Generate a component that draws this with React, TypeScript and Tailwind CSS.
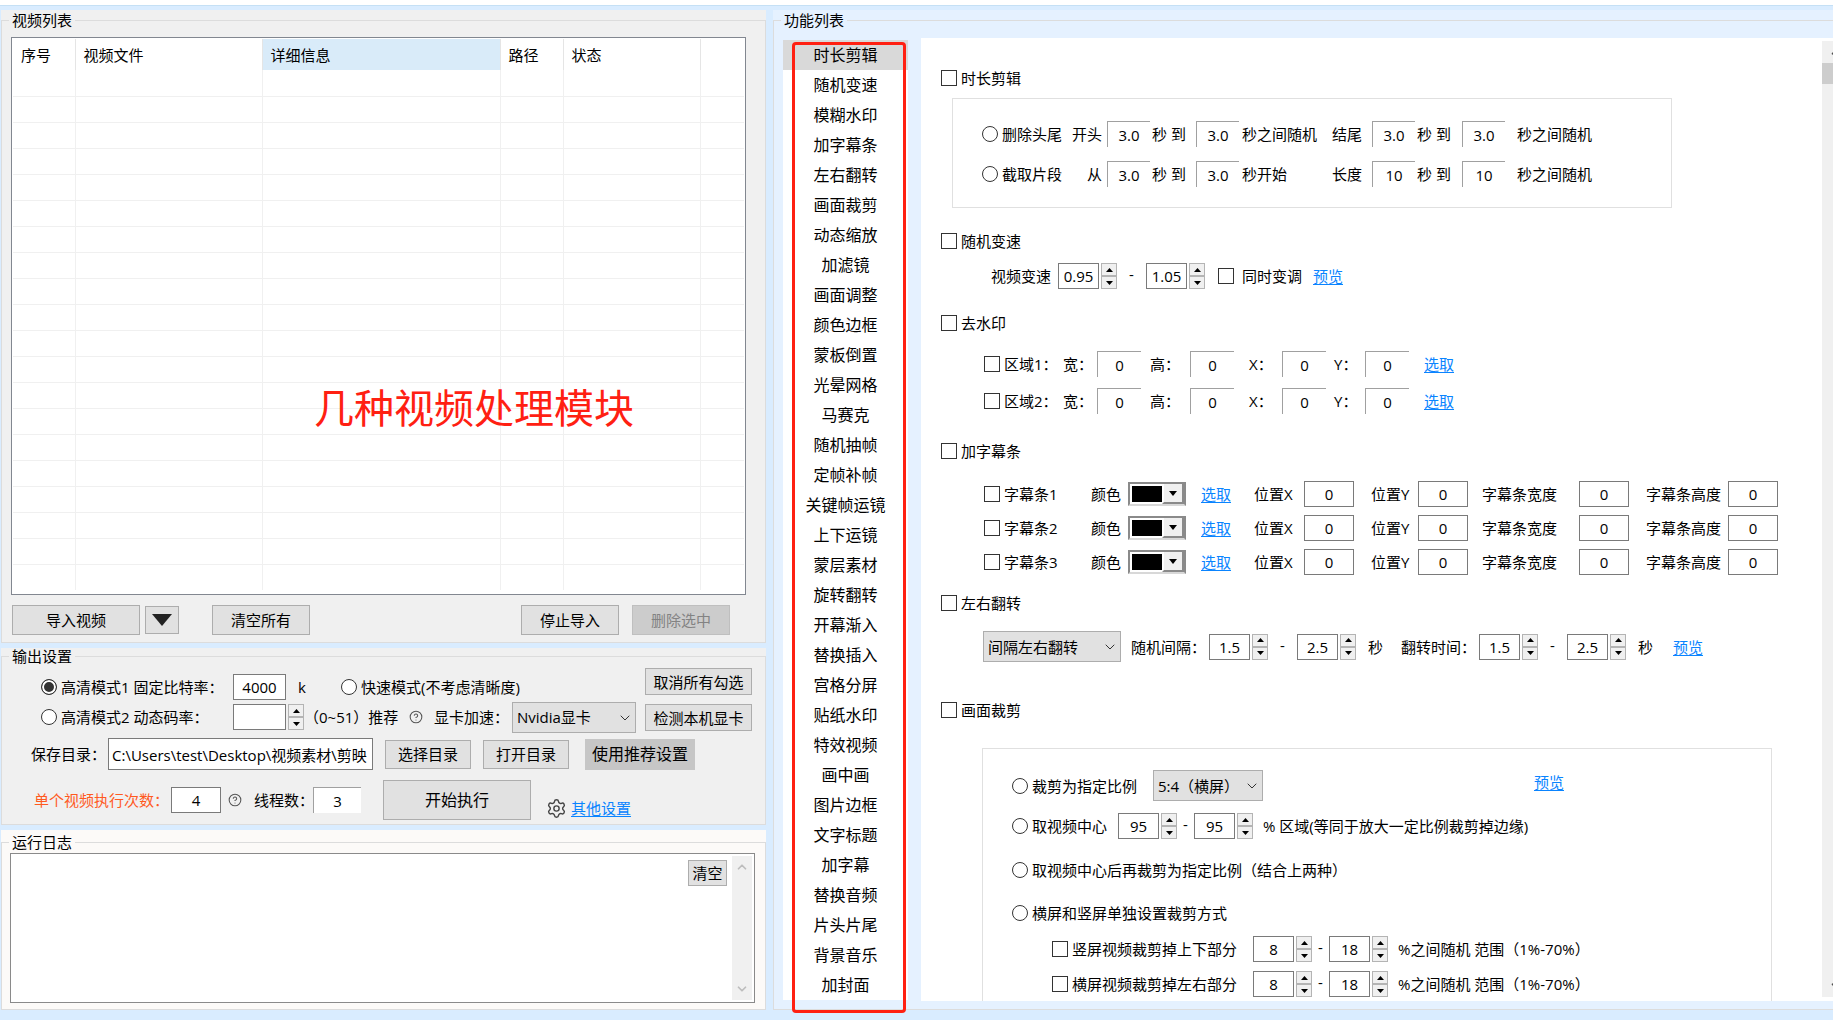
import type { ReactNode } from "react";
import { ChevronDown, ChevronUp, CircleQuestionMark, Settings } from "lucide-react";
import clsx from "clsx";

const FEATURES = [
  "时长剪辑", "随机变速", "模糊水印", "加字幕条", "左右翻转", "画面裁剪", "动态缩放", "加滤镜",
  "画面调整", "颜色边框", "蒙板倒置", "光晕网格", "马赛克", "随机抽帧", "定帧补帧", "关键帧运镜",
  "上下运镜", "蒙层素材", "旋转翻转", "开幕渐入", "替换插入", "宫格分屏", "贴纸水印", "特效视频",
  "画中画", "图片边框", "文字标题", "加字幕", "替换音频", "片头片尾", "背景音乐", "加封面"
];

const COLUMNS = [
  { name: "序号", width: "w-[62px]" },
  { name: "视频文件", width: "w-[187px]" },
  { name: "详细信息", width: "w-[238px]", active: true },
  { name: "路径", width: "w-[63px]" },
  { name: "状态", width: "w-[137px]" },
  { name: "", width: "" }
];

const TRIM_ROWS = [
  { mode: "删除头尾", from: "开头", value: "3.0", unit: "秒之间随机", to: "结尾", end: "3.0" },
  { mode: "截取片段", from: "从", value: "3.0", unit: "秒开始", to: "长度", end: "10" }
];

function GroupBox({
  title,
  className,
  bodyClassName,
  children
}: {
  title: string;
  className?: string;
  bodyClassName?: string;
  children: ReactNode;
}) {
  return (
    <section className={clsx("flex min-w-0 flex-col", className)}>
      <fieldset className={clsx("flex min-w-0 flex-1 flex-col border border-[#dcdcdc]", bodyClassName)}>
        <legend className="ml-[7px] px-[3px] leading-4">{title}</legend>
        {children}
      </fieldset>
    </section>
  );
}

function Button({ className, children, disabled }: { className?: string; children: ReactNode; disabled?: boolean }) {
  return (
    <button
      type="button"
      disabled={disabled}
      className={clsx("flex shrink-0 items-center justify-center border whitespace-nowrap", className, {
        "border-[#bfbfbf] bg-[#cccccc] text-[#838383]": disabled,
        "border-[#adadad] bg-[#e1e1e1]": !disabled
      })}
    >
      {children}
    </button>
  );
}

function TextBox({
  id,
  label,
  value,
  className,
  sunken
}: {
  id?: string;
  label?: string;
  value: string;
  className: string;
  sunken?: boolean;
}) {
  return (
    <input
      id={id}
      type="text"
      aria-label={label}
      defaultValue={value}
      className={clsx("h-[26px] shrink-0 bg-white text-center", className, {
        "border-t border-l border-[#a0a0a0]": sunken,
        "border border-[#7a7a7a]": !sunken
      })}
    />
  );
}

function Spinner({ id, label, value, width = "w-[41px]" }: { id?: string; label: string; value: string; width?: string }) {
  return (
    <span className="flex shrink-0 items-center gap-0.5">
      <TextBox id={id} label={label} value={value} className={width} />
      <span className="flex h-[26px] w-4 flex-col">
        <button type="button" aria-label={`${label} +`} className="flex flex-1 items-center justify-center border border-[#b4b4b4] bg-[#f0f0f0]">
          <svg width="7" height="4" viewBox="0 0 7 4"><path d="M0 4L3.5 0L7 4Z" fill="#000" /></svg>
        </button>
        <button type="button" aria-label={`${label} -`} className="flex flex-1 items-center justify-center border border-[#b4b4b4] bg-[#f0f0f0]">
          <svg width="7" height="4" viewBox="0 0 7 4"><path d="M0 0L3.5 4L7 0Z" fill="#000" /></svg>
        </button>
      </span>
    </span>
  );
}

function Select({ label, value, className }: { label: string; value: string; className: string }) {
  return (
    <span className={clsx("relative h-[31px] shrink-0", className)}>
      <select aria-label={label} className="size-full appearance-none border border-[#adadad] bg-[#e1e1e1] pl-1">
        <option>{value}</option>
      </select>
      <ChevronDown size={16} strokeWidth={1.5} className="pointer-events-none absolute top-2 right-[3px] text-[#333]" />
    </span>
  );
}

function ColorSelect({ label }: { label: string }) {
  return (
    <span className="relative h-6 w-[58px] border-2 border-[#8a8a8a] border-b-[#d8d8d8]">
      <select aria-label={label} className="size-full appearance-none border-2 border-white bg-black text-transparent">
        <option>#000000</option>
      </select>
      <span className="pointer-events-none absolute inset-y-0 right-0 flex w-[22px] items-center justify-center border-r-2 border-b-2 border-l-2 border-r-[#8a8a8a] border-b-[#8a8a8a] border-l-white bg-[#f0f0f0]">
        <svg width="8" height="5" viewBox="0 0 8 5"><path d="M0 0L4 5L8 0Z" fill="#000" /></svg>
      </span>
    </span>
  );
}

function Check({ children, className = "gap-1" }: { children: ReactNode; className?: string }) {
  return (
    <label className={clsx("flex shrink-0 items-center whitespace-nowrap", className)}>
      <input type="checkbox" className="size-4 shrink-0 appearance-none border border-[#333] bg-white checked:bg-[#333]" />
      {children}
    </label>
  );
}

function Radio({
  name,
  children,
  className,
  checked
}: {
  name: string;
  children: ReactNode;
  className?: string;
  checked?: boolean;
}) {
  return (
    <label className={clsx("flex shrink-0 items-center gap-1 whitespace-nowrap", className)}>
      <input
        type="radio"
        name={name}
        defaultChecked={checked}
        className="size-4 shrink-0 appearance-none rounded-full border border-[#333] bg-white checked:bg-[#333] checked:shadow-[inset_0_0_0_2px_#fff]"
      />
      {children}
    </label>
  );
}

function Link({ children }: { children: ReactNode }) {
  return <a href="#" className="shrink-0 text-[#0a84ff] underline underline-offset-2">{children}</a>;
}

function Dash({ className = "w-[29px]" }: { className?: string }) {
  return <span className={clsx("shrink-0 pb-1 text-center", className)}>-</span>;
}

function VideoList() {
  return (
    <GroupBox title="视频列表" className="bg-[#f0f0f0] pt-0.5" bodyClassName="pb-[7px]">
      <div className="relative mt-[9px] mr-[19px] ml-[9px] h-[558px] border border-[#828790] bg-white p-px">
        <table className="w-full table-fixed border-collapse text-left">
          <thead>
            <tr className="h-[31px]">
              {COLUMNS.map((col) => (
                <th
                  key={col.name}
                  className={clsx("border-[#e5e5e5] p-0 pl-2 font-normal", col.width, {
                    "bg-[#d9ebf9]": col.active,
                    "border-r": col.name
                  })}
                >
                  {col.name}
                </th>
              ))}
            </tr>
          </thead>
          <tbody>
            {Array.from({ length: 20 }, (_, row) => (
              <tr key={row} className="h-[26px]">
                {COLUMNS.map((col) => (
                  <td
                    key={col.name}
                    className={clsx("border-[#f0f0f0] p-0", { "border-b": row < 19, "border-r": col.name })}
                  />
                ))}
              </tr>
            ))}
          </tbody>
        </table>
        <p className="absolute top-[346px] left-[302px] text-[40px] leading-[48px] whitespace-nowrap text-[#ff2012]">
          几种视频处理模块
        </p>
      </div>
      <div className="mt-2.5 mr-[35px] ml-2.5 flex items-center">
        <Button className="h-[30px] w-32">导入视频</Button>
        <button type="button" aria-label="更多导入方式" className="ml-[5px] flex h-7 w-[34px] items-center justify-center border border-[#adadad] bg-[#e1e1e1]">
          <svg width="20" height="12" viewBox="0 0 20 12"><path d="M0 0H20L10 12Z" fill="#222" /></svg>
        </button>
        <Button className="ml-[33px] h-[30px] w-[98px]">清空所有</Button>
        <div className="ml-auto flex gap-[13px]">
          <Button className="h-[30px] w-[98px]">停止导入</Button>
          <Button className="h-[30px] w-[98px]" disabled>删除选中</Button>
        </div>
      </div>
    </GroupBox>
  );
}

function OutputSettings() {
  return (
    <GroupBox title="输出设置" className="bg-[#f0f0f0]" bodyClassName="pb-1">
      <div className="mt-1 mr-[13px] flex justify-between">
        <div className="pt-1 pl-[39px]">
          <div className="flex h-[30px] items-center">
            <Radio name="quality" className="w-48" checked>高清模式1 固定比特率：</Radio>
            <TextBox label="固定比特率" value="4000" className="w-[53px]" />
            <span className="w-[55px] pl-3">k</span>
            <Radio name="quality">快速模式(不考虑清晰度)</Radio>
          </div>
          <div className="flex h-[30px] items-center">
            <Radio name="quality" className="w-48">高清模式2 动态码率：</Radio>
            <Spinner label="动态码率" value="" width="w-[53px]" />
            <span className="w-[105px] whitespace-nowrap">（0~51）推荐</span>
            <CircleQuestionMark size={14} strokeWidth={1.8} className="text-[#555]" />
            <span className="w-[89px] pl-[11px] whitespace-nowrap">显卡加速：</span>
            <Select label="显卡加速" value="Nvidia显卡" className="w-[124px]" />
          </div>
        </div>
        <div className="flex flex-col gap-[9px]">
          <Button className="h-[27px] w-[107px]">取消所有勾选</Button>
          <Button className="h-[27px] w-[107px]">检测本机显卡</Button>
        </div>
      </div>
      <div className="mt-1.5 flex items-center pl-[29px]">
        <label htmlFor="save-dir" className="w-[77px] whitespace-nowrap">保存目录：</label>
        <input
          id="save-dir"
          type="text"
          defaultValue="C:\Users\test\Desktop\视频素材\剪映"
          className="h-8 w-[265px] border border-[#7a7a7a] bg-white pl-[3px]"
        />
        <Button className="ml-3 h-[29px] w-[86px]">选择目录</Button>
        <Button className="ml-3 h-[29px] w-[86px]">打开目录</Button>
        <button type="button" className="ml-4 h-[31px] w-[110px] bg-[#c6c6c6] text-base">使用推荐设置</button>
      </div>
      <div className="mt-2.5 flex items-center pl-8">
        <label htmlFor="runs" className="w-[137px] whitespace-nowrap text-[#ff5a1f]">单个视频执行次数：</label>
        <TextBox id="runs" value="4" className="w-[50px]" />
        <CircleQuestionMark size={14} strokeWidth={1.8} className="ml-[7px] text-[#555]" />
        <label htmlFor="threads" className="ml-3 w-[59px] whitespace-nowrap">线程数：</label>
        <TextBox id="threads" value="3" className="w-12" sunken />
        <Button className="ml-[22px] h-10 w-[148px] text-base">开始执行</Button>
        <span className="ml-[15px] flex h-6 items-center gap-1 self-end">
          <Settings size={21} strokeWidth={1.6} className="text-[#444]" />
          <Link>其他设置</Link>
        </span>
      </div>
    </GroupBox>
  );
}

function RunLog() {
  return (
    <GroupBox title="运行日志" className="flex-1 bg-[#fcfaf8] pt-1" bodyClassName="pb-1.5">
      <div className="mt-[3px] mr-2.5 ml-2 flex flex-1 border border-[#8a8a8a] bg-white p-0.5">
        <textarea aria-label="运行日志" readOnly className="flex-1 resize-none" />
        <Button className="mt-1 mr-[5px] h-[26px] w-[39px]">清空</Button>
        <div className="flex w-5 flex-col items-center justify-between bg-[#f0f0f0] py-1 text-[#bdbdbd]">
          <ChevronUp size={14} strokeWidth={3} />
          <ChevronDown size={14} strokeWidth={3} />
        </div>
      </div>
    </GroupBox>
  );
}

function FeatureNav() {
  return (
    <nav className="relative mt-0.5 w-[125px] shrink-0 self-start bg-white">
      <ul>
        {FEATURES.map((name, i) => (
          <li key={name}>
            <button type="button" className={clsx("block h-[30px] w-full text-base", { "bg-[#d9d9d9]": i === 0 })}>
              {name}
            </button>
          </li>
        ))}
      </ul>
      <div className="pointer-events-none absolute top-0.5 -bottom-[13px] left-[9px] w-[114px] rounded-sm border-[3px] border-[#ff2012]" />
    </nav>
  );
}

function TrimSettings() {
  return (
    <div className="mt-2.5 mr-[150px] ml-[31px] border border-[#e0e0e0] pt-[15px] pb-[13px] pl-[29px]">
      {TRIM_ROWS.map((row) => (
        <div
          key={row.mode}
          className="grid h-10 grid-cols-[90px_35px_45px_44px_46px_90px_40px_45px_45px_55px_75px] items-center whitespace-nowrap"
        >
          <Radio name="trim">{row.mode}</Radio>
          <span className="w-[30px] text-right">{row.from}</span>
          <TextBox label={`${row.mode} ${row.from} 最小`} value={row.value} className="w-[43px]" sunken />
          <span>秒 到</span>
          <TextBox label={`${row.mode} ${row.from} 最大`} value={row.value} className="w-[43px]" sunken />
          <span>{row.unit}</span>
          <span>{row.to}</span>
          <TextBox label={`${row.mode} ${row.to} 最小`} value={row.end} className="w-[43px]" sunken />
          <span>秒 到</span>
          <TextBox label={`${row.mode} ${row.to} 最大`} value={row.end} className="w-[43px]" sunken />
          <span>秒之间随机</span>
        </div>
      ))}
    </div>
  );
}

function WatermarkSettings() {
  return (
    <div className="mt-[18px] flex flex-col gap-[11px] pl-[63px]">
      {[1, 2].map((n) => (
        <div
          key={n}
          className="grid grid-cols-[79px_34px_53px_40px_59px_33px_52px_31px_59px_30px] items-center whitespace-nowrap"
        >
          <Check>区域{n}：</Check>
          <label htmlFor={`region-${n}-w`}>宽：</label>
          <TextBox id={`region-${n}-w`} value="0" className="w-11" sunken />
          <label htmlFor={`region-${n}-h`}>高：</label>
          <TextBox id={`region-${n}-h`} value="0" className="w-11" sunken />
          <label htmlFor={`region-${n}-x`}>X：</label>
          <TextBox id={`region-${n}-x`} value="0" className="w-11" sunken />
          <label htmlFor={`region-${n}-y`}>Y：</label>
          <TextBox id={`region-${n}-y`} value="0" className="w-11" sunken />
          <Link>选取</Link>
        </div>
      ))}
    </div>
  );
}

function SubtitleBarSettings() {
  return (
    <div className="mt-5 flex flex-col gap-2 pl-[63px]">
      {[1, 2, 3].map((n) => (
        <div
          key={n}
          className="grid grid-cols-[107px_37px_73px_53px_50px_67px_47px_64px_97px_67px_82px_50px] items-center whitespace-nowrap"
        >
          <Check>字幕条{n}</Check>
          <span>颜色</span>
          <ColorSelect label={`字幕条${n} 颜色`} />
          <Link>选取</Link>
          <label htmlFor={`bar-${n}-x`}>位置X</label>
          <TextBox id={`bar-${n}-x`} value="0" className="w-[50px]" />
          <label htmlFor={`bar-${n}-y`}>位置Y</label>
          <TextBox id={`bar-${n}-y`} value="0" className="w-[50px]" />
          <label htmlFor={`bar-${n}-w`}>字幕条宽度</label>
          <TextBox id={`bar-${n}-w`} value="0" className="w-[50px]" />
          <label htmlFor={`bar-${n}-h`}>字幕条高度</label>
          <TextBox id={`bar-${n}-h`} value="0" className="w-[50px]" />
        </div>
      ))}
    </div>
  );
}

function CropSettings() {
  return (
    <div className="mt-7 mr-[50px] ml-[61px] flex-1 border border-b-0 border-[#e0e0e0] pt-[21px] pl-[29px]">
      <div className="flex items-center">
        <Radio name="crop" className="w-[141px]">裁剪为指定比例</Radio>
        <Select label="裁剪比例" value="5:4（横屏）" className="w-[110px]" />
        <span className="ml-auto self-start pt-0.5 pr-[207px]"><Link>预览</Link></span>
      </div>
      <div className="mt-3 flex items-center">
        <Radio name="crop" className="w-[106px]">取视频中心</Radio>
        <Spinner label="中心区域最小" value="95" />
        <Dash className="w-[17px]" />
        <Spinner label="中心区域最大" value="95" />
        <span className="pl-2.5 whitespace-nowrap">% 区域(等同于放大一定比例裁剪掉边缘)</span>
      </div>
      <Radio name="crop" className="mt-[21px] h-5">取视频中心后再裁剪为指定比例（结合上两种）</Radio>
      <Radio name="crop" className="mt-[23px] h-5">横屏和竖屏单独设置裁剪方式</Radio>
      <div className="mt-[13px] flex flex-col gap-[9px] pl-10">
        {["竖屏视频裁剪掉上下部分", "横屏视频裁剪掉左右部分"].map((name) => (
          <div key={name} className="flex items-center">
            <span className="w-[201px]"><Check>{name}</Check></span>
            <Spinner label={`${name}最小`} value="8" />
            <Dash className="w-[17px]" />
            <Spinner label={`${name}最大`} value="18" />
            <span className="pl-2.5 whitespace-nowrap">%之间随机 范围（1%-70%）</span>
          </div>
        ))}
      </div>
    </div>
  );
}

function FeatureSettings() {
  return (
    <div className="flex min-w-0 flex-1 bg-white">
      <div className="flex min-w-0 flex-1 flex-col overflow-hidden pt-[30px]">
        <Check className="ml-5 h-5 gap-1">时长剪辑</Check>
        <TrimSettings />

        <Check className="mt-[23px] ml-5 h-5 gap-1">随机变速</Check>
        <div className="mt-3 flex items-center pl-[70px]">
          <span className="w-[67px]">视频变速</span>
          <Spinner label="视频变速最小" value="0.95" />
          <Dash />
          <Spinner label="视频变速最大" value="1.05" />
          <span className="w-[108px] pl-[13px]"><Check className="gap-2">同时变调</Check></span>
          <Link>预览</Link>
        </div>

        <Check className="mt-6 ml-5 h-5 gap-1">去水印</Check>
        <WatermarkSettings />

        <Check className="mt-[27px] ml-5 h-5 gap-1">加字幕条</Check>
        <SubtitleBarSettings />

        <Check className="mt-[18px] ml-5 h-5 gap-1">左右翻转</Check>
        <div className="mt-[18px] flex items-center pl-[62px] whitespace-nowrap">
          <Select label="翻转方式" value="间隔左右翻转" className="w-[138px]" />
          <span className="w-[88px] pl-2.5">随机间隔：</span>
          <Spinner label="随机间隔最小" value="1.5" />
          <Dash />
          <Spinner label="随机间隔最大" value="2.5" />
          <span className="w-[45px] pl-3">秒</span>
          <span className="w-[78px]">翻转时间：</span>
          <Spinner label="翻转时间最小" value="1.5" />
          <Dash />
          <Spinner label="翻转时间最大" value="2.5" />
          <span className="w-[47px] pl-3">秒</span>
          <Link>预览</Link>
        </div>

        <Check className="mt-[38px] ml-5 h-5 gap-1">画面裁剪</Check>
        <CropSettings />
      </div>
      <div className="mt-[3px] mb-1 flex w-[11px] shrink-0 flex-col overflow-hidden bg-[#f0f0f0]">
        <ChevronUp size={14} strokeWidth={3} className="my-1 ml-[7px] shrink-0 text-[#505050]" />
        <div className="h-[21px] bg-[#cdcdcd]" />
        <ChevronDown size={14} strokeWidth={3} className="mt-auto mb-1 ml-[7px] shrink-0 text-[#505050]" />
      </div>
    </div>
  );
}

export default function App() {
  return (
    <div className="flex min-h-screen flex-col border-t-[5px] border-white bg-[#d9ecff] font-['Open_Sans','Noto_Sans_CJK_SC',sans-serif] text-[15px] leading-5 text-black">
      <main className="grid flex-1 grid-cols-[minmax(0,765fr)_minmax(0,1060fr)] gap-[7px] border-t border-[#c5e0f5] pt-1 pb-2.5 pl-px">
        <div className="flex min-w-0 flex-col gap-[5px]">
          <VideoList />
          <OutputSettings />
          <RunLog />
        </div>
        <GroupBox title="功能列表" className="bg-[#e5f1ff] pt-0.5" bodyClassName="border-r-0 pb-2">
          <div className="mt-2.5 flex flex-1 gap-[13px] pl-[9px]">
            <FeatureNav />
            <FeatureSettings />
          </div>
        </GroupBox>
      </main>
    </div>
  );
}
